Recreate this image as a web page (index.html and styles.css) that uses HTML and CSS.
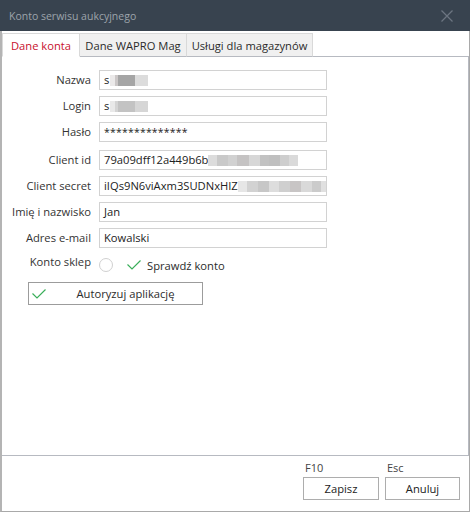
FILE: index.html
```html
<!DOCTYPE html>
<html lang="pl">
<head>
<meta charset="utf-8">
<link rel="stylesheet" href="styles.css">
</head>
<body>
<div class="window">
  <div class="titlebar">
    <span class="title">Konto serwisu aukcyjnego</span>
    <svg class="close" width="12" height="12" viewBox="0 0 12 12"><path d="M0.5 0.5 L11.5 11.5 M11.5 0.5 L0.5 11.5" stroke="#6c7581" stroke-width="1.3" fill="none"/></svg>
  </div>
  <div class="tabs">
    <div class="tab active t1">Dane konta</div>
    <div class="tab t2">Dane WAPRO Mag</div>
    <div class="tab t3">Usługi dla magazynów</div>
    <div class="tab-fill"></div>
  </div>
  <div class="panel">
    <div class="form">
      <label class="lbl">Nazwa</label>
      <div class="field">s<span class="blur b1"></span></div>
      <label class="lbl">Login</label>
      <div class="field">s<span class="blur b2"></span></div>
      <label class="lbl">Hasło</label>
      <div class="field pw">**************</div>
      <label class="lbl sp">Client id</label>
      <div class="field sp">79a09dff12a449b6b<span class="blur b3"></span></div>
      <label class="lbl">Client secret</label>
      <div class="field">iIQs9N6viAxm3SUDNxHIZ<span class="blur b4"></span></div>
      <label class="lbl">Imię i nazwisko</label>
      <div class="field">Jan</div>
      <label class="lbl">Adres e-mail</label>
      <div class="field">Kowalski</div>
      <label class="lbl shop">Konto sklep</label>
      <div class="shoprow">
        <span class="radio"></span>
        <svg class="check" width="14" height="10" viewBox="0 0 14 10"><path d="M0.5 4.5 L5 9 L13.5 0.5" stroke="#3aae5a" stroke-width="1.2" fill="none"/></svg>
        <span class="checklbl">Sprawdź konto</span>
      </div>
    </div>
    <button class="authbtn">
      <svg class="check btncheck" width="14" height="10" viewBox="0 0 14 10"><path d="M0.5 4.5 L5 9 L13.5 0.5" stroke="#3aae5a" stroke-width="1.2" fill="none"/></svg>
      <span>Autoryzuj aplikację</span>
    </button>
  </div>
  <div class="footer">
    <div class="action">
      <span class="key">F10</span>
      <button class="btn">Zapisz</button>
    </div>
    <div class="action">
      <span class="key">Esc</span>
      <button class="btn">Anuluj</button>
    </div>
  </div>
</div>
</body>
</html>
```
FILE: styles.css
```css
html, body {
  margin: 0;
  padding: 0;
  background: #ffffff;
}
body {
  font-family: "Open Sans", "Noto Sans", sans-serif;
  font-size: 11.2px;
  color: #2b2b2b;
}
.window {
  width: 470px;
  height: 512px;
  box-sizing: border-box;
  border: 1px solid #a9a9a9;
  border-left: 2px solid #b4b4b4;
  border-top: none;
  display: flex;
  flex-direction: column;
  background: #fff;
}
.titlebar {
  height: 31px;
  flex: none;
  background: #38434f;
  display: flex;
  align-items: center;
  padding-left: 9px;
  padding-right: 17px;
  margin-left: -2px;
  margin-right: -1px;
}
.title {
  color: #9da3ab;
  font-size: 10.5px;
  flex: 1;
}
.close {
  display: block;
}
.tabs {
  height: 26px;
  flex: none;
  display: flex;
  align-items: flex-end;
  padding-top: 2px;
  box-sizing: border-box;
}
.tab {
  height: 24px;
  box-sizing: border-box;
  display: flex;
  align-items: center;
  justify-content: center;
  background: #f0f0f0;
  border: 1px solid #d9d9d9;
  border-left: none;
  border-bottom: 1px solid #b7bac1;
  color: #2b2b2b;
  white-space: nowrap;
}
.t1 { width: 78px; }
.t2 { width: 107px; }
.t3 { width: 126px; }
.tab.active {
  background: #fff;
  color: #c8102e;
  border-left: 1px solid #d9d9d9;
  border-bottom-color: #fff;
}
.tab-fill {
  flex: 1;
  border-bottom: 1px solid #b7bac1;
  height: 24px;
  box-sizing: border-box;
}
.panel {
  flex: 1;
  border-right: 1px solid #b7bac1;
  border-bottom: 1px solid #b7bac1;
  padding-top: 13px;
  display: flex;
  flex-direction: column;
}
.form {
  display: grid;
  grid-template-columns: 88px 228px;
  column-gap: 8px;
  row-gap: 6px;
  padding-left: 1px;
}
.lbl {
  text-align: right;
  line-height: 20px;
  height: 20px;
  color: #333;
  white-space: nowrap;
}
.field {
  height: 20px;
  box-sizing: border-box;
  border: 1px solid #d2d2d2;
  padding-left: 4px;
  line-height: 18px;
  display: flex;
  align-items: center;
  white-space: nowrap;
  overflow: hidden;
  color: #222;
}
.field.pw {
  font-size: 10.5px;
  letter-spacing: 0.2px;
}
.sp {
  margin-top: 2px;
}
.blur {
  display: inline-block;
  height: 11px;
  flex: none;
}
.b1 {
  width: 38px;
  margin-left: 1px;
  background: linear-gradient(90deg, #ebe9e9 0 12%, #cbc7c7 12% 22%, #a5a5a5 22% 66%, #dcdcdc 66% 100%);
}
.b2 {
  width: 38px;
  margin-left: 1px;
  background: linear-gradient(90deg, #e9e9e9 0 12%, #d4d4d4 12% 22%, #c3c3c3 22% 66%, #d6d6d6 66% 100%);
}
.b3 {
  width: 90px;
  background: linear-gradient(90deg, #dcdcdc 0 10%, #c9c9c9 10% 22%, #d1d1d1 22% 32%, #c5c3c3 32% 46%, #d7d7d7 46% 58%, #c2c2c2 58% 68%, #bfbfbf 68% 80%, #cecece 80% 90%, #dadada 90% 100%);
}
.b4 {
  width: 90px;
  background: linear-gradient(90deg, #e6e6e6 0 10%, #d2d2d2 10% 22%, #c7c7c7 22% 34%, #dddddd 34% 46%, #cfcfcf 46% 58%, #c8c5c5 58% 70%, #d9d9d9 70% 82%, #cbcbcb 82% 92%, #e0e0e0 92% 100%);
}
.shop {
  margin-top: 1px;
  line-height: 14px;
  height: 14px;
}
.shoprow {
  margin-top: 4px;
  display: flex;
  align-items: center;
  height: 14px;
}
.radio {
  width: 12px;
  height: 12px;
  border: 1px solid #d0d0d0;
  border-radius: 50%;
  flex: none;
}
.check {
  display: block;
  flex: none;
}
.shoprow .check {
  margin-left: 14px;
}
.checklbl {
  margin-left: 6px;
  color: #2b2b2b;
}
.authbtn {
  margin-top: 10px;
  margin-left: 26px;
  width: 175px;
  height: 23px;
  box-sizing: border-box;
  border: 1px solid #9c9c9c;
  background: #fff;
  font: inherit;
  color: #2b2b2b;
  display: flex;
  align-items: center;
  padding: 0 0 0 3px;
}
.authbtn span {
  flex: 1;
  text-align: center;
  padding-left: 3px;
}
.footer {
  height: 55px;
  flex: none;
  display: flex;
  justify-content: flex-end;
  gap: 6px;
  padding-right: 9px;
  padding-top: 3px;
  box-sizing: border-box;
}
.action {
  display: flex;
  flex-direction: column;
}
.key {
  height: 18px;
  line-height: 18px;
  padding-left: 2px;
  color: #444;
  font-size: 11px;
}
.btn {
  width: 76px;
  height: 23px;
  box-sizing: border-box;
  border: 1px solid #adadad;
  background: #fff;
  font: inherit;
  color: #222;
  padding: 0;
}
.action:last-child .btn {
  width: 75px;
}
```
